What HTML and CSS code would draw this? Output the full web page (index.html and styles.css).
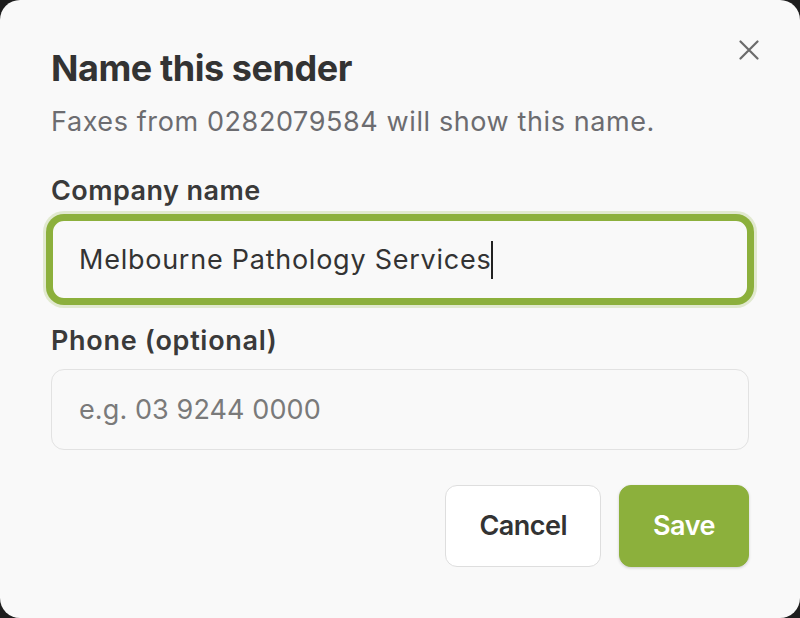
FILE: index.html
```html
<!DOCTYPE html>
<html lang="en">
<head>
<meta charset="utf-8">
<title>Name this sender</title>
<link rel="stylesheet" href="styles.css">
</head>
<body>
<div class="dialog" role="dialog" aria-labelledby="dlg-title">
  <div class="header">
    <h1 class="title" id="dlg-title">Name this sender</h1>
    <button class="close" aria-label="Close">
      <svg width="20" height="20" viewBox="0 0 20 20" fill="none" stroke="#6b6b6b" stroke-width="2.2" stroke-linecap="round"><path d="M1.5 1.5L18.5 18.5M18.5 1.5L1.5 18.5"/></svg>
    </button>
  </div>
  <p class="subtitle">Faxes from 0282079584 will show this name.</p>
  <div class="field field-first">
    <label class="label">Company name</label>
    <div class="input input-focused"><span class="value">Melbourne Pathology Services</span><span class="caret"></span></div>
  </div>
  <div class="field">
    <label class="label">Phone (optional)</label>
    <div class="input"><span class="placeholder">e.g. 03 9244 0000</span></div>
  </div>
  <div class="actions">
    <button class="btn btn-cancel">Cancel</button>
    <button class="btn btn-save">Save</button>
  </div>
</div>
</body>
</html>
```

FILE: styles.css
```css
* { box-sizing: border-box; }
html, body {
  margin: 0;
  padding: 0;
  background: #1e1e1e;
}
body {
  width: 800px;
  height: 618px;
  overflow: hidden;
  font-family: Inter, "Noto Sans", "Liberation Sans", sans-serif;
}
.dialog {
  width: 800px;
  height: 618px;
  background: #f9f9f9;
  border-radius: 20px;
  padding: 46px 51px 0;
  display: flex;
  flex-direction: column;
}
.header {
  display: flex;
  justify-content: space-between;
  align-items: flex-start;
}
.title {
  margin: 0;
  font-size: 36px;
  line-height: 44px;
  font-weight: 700;
  color: #333333;
  letter-spacing: -0.45px;
}
.close {
  width: 20px;
  height: 20px;
  padding: 0;
  margin: -6px -10px 0 0;
  border: 0;
  background: none;
  display: flex;
}
.subtitle {
  margin: 14px 0 0;
  font-size: 27px;
  line-height: 36px;
  color: #6c6c70;
  letter-spacing: 0.6px;
}
.field {
  display: flex;
  flex-direction: column;
  gap: 10px;
  margin-top: 23px;
}
.field-first { margin-top: 33px; }
.label {
  font-size: 27px;
  line-height: 36px;
  font-weight: 600;
  color: #3a3a3a;
  letter-spacing: 0.45px;
}
.field + .field .label { letter-spacing: 0.7px; }
.input {
  height: 81px;
  border: 1px solid #e2e2e2;
  border-radius: 13px;
  background: #f9f9f9;
  padding: 0 27px;
  display: flex;
  align-items: center;
  font-size: 27px;
  line-height: 36px;
}
.input-focused {
  border: 2px solid #8cb03c;
  padding-left: 26px;
  box-shadow: 0 0 0 5px #8cb03c, 0 0 0 8px rgba(140, 176, 60, 0.22);
}
.value {
  color: #333333;
  letter-spacing: 0.75px;
}
.caret {
  display: inline-block;
  width: 2px;
  height: 38px;
  margin-left: 0;
  background: #222;
}
.placeholder {
  color: #7a7a7a;
  letter-spacing: 0.1px;
}
.actions {
  margin-top: 35px;
  display: flex;
  justify-content: flex-end;
  gap: 18px;
}
.btn {
  height: 82px;
  padding: 0 33px;
  border-radius: 12px;
  font-family: inherit;
  font-size: 27px;
  font-weight: 600;
  line-height: 36px;
  letter-spacing: -0.5px;
}
.btn-cancel {
  background: #ffffff;
  border: 1px solid #dedede;
  color: #333333;
}
.btn-save {
  background: #8cb03c;
  border: 1px solid #8cb03c;
  color: #ffffff;
  box-shadow: 0 1px 3px rgba(0, 0, 0, 0.18);
}
```
